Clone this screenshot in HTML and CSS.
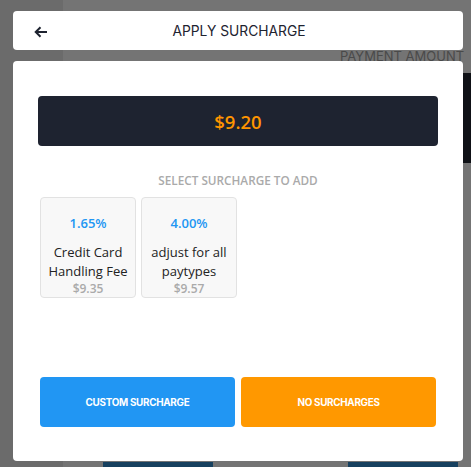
FILE: index.html
```html
<!DOCTYPE html>
<html>
<head>
<meta charset="utf-8">
<link rel="stylesheet" href="styles.css">
</head>
<body>
<div class="backdrop">
  <div class="bg-side"></div>
  <div class="bg-label">PAYMENT AMOUNT</div>
  <div class="bg-dark"></div>
  <div class="bg-btn bg-btn-a"></div>
  <div class="bg-btn bg-btn-b"></div>
</div>
<div class="modal">
  <div class="header">
    <svg class="back" width="14" height="12" viewBox="0 0 14 12"><path d="M13 6H2M6.5 1.2L1.7 6l4.8 4.8" fill="none" stroke="#1e2330" stroke-width="2"/></svg>
    <div class="title">APPLY SURCHARGE</div>
  </div>
  <div class="card">
    <div class="amount">$9.20</div>
    <div class="label">SELECT SURCHARGE TO ADD</div>
    <div class="options">
      <div class="option">
        <div class="pct">1.65%</div>
        <div class="name">Credit Card Handling Fee</div>
        <div class="price">$9.35</div>
      </div>
      <div class="option">
        <div class="pct">4.00%</div>
        <div class="name">adjust for all paytypes</div>
        <div class="price">$9.57</div>
      </div>
    </div>
    <div class="actions">
      <div class="btn btn-blue">CUSTOM SURCHARGE</div>
      <div class="btn btn-orange">NO SURCHARGES</div>
    </div>
  </div>
</div>
</body>
</html>
```
FILE: styles.css
```css
html, body { margin: 0; padding: 0; }
body {
  width: 471px;
  height: 467px;
  overflow: hidden;
  background: #747474;
  position: relative;
  font-family: "Open Sans", sans-serif;
}
.backdrop { position: absolute; inset: 0; }
.bg-side { position: absolute; left: 0; top: 0; width: 63px; height: 467px; background: #6b6b6b; }
.bg-label {
  position: absolute; left: 340px; top: 48px;
  font-family: Inter, sans-serif; font-size: 13px; color: #4a4a4a; white-space: nowrap;
}
.bg-dark { position: absolute; left: 463px; top: 73px; width: 8px; height: 90px; background: #0f1116; }
.bg-btn { position: absolute; top: 462px; height: 5px; background: #16405f; }
.bg-btn-a { left: 103px; width: 110px; }
.bg-btn-b { left: 348px; width: 110px; }

.modal {
  position: relative;
  display: flex;
  flex-direction: column;
  gap: 11px;
  padding: 11px 8px 0 13px;
}
.header {
  height: 39px;
  background: #fff;
  border-radius: 4px;
  display: flex;
  align-items: center;
  position: relative;
}
.back { position: absolute; left: 21px; top: 15px; }
.title {
  flex: 1;
  text-align: center;
  font-family: Inter, sans-serif;
  font-size: 13.8px;
  color: #1e2330;
  padding-left: 2px;
}
.card {
  height: 400px;
  box-sizing: border-box;
  background: #fff;
  border-radius: 4px;
  padding: 35px 25px 0 25px;
  display: flex;
  flex-direction: column;
}
.amount {
  height: 50px;
  background: #1e2330;
  border-radius: 4px;
  display: flex;
  align-items: center;
  justify-content: center;
  color: #ff9500;
  font-weight: 600;
  font-size: 18.5px;
  padding-top: 1px;
  box-sizing: border-box;
}
.label {
  margin-top: 26px;
  text-align: center;
  font-size: 11.75px;
  font-weight: 600;
  color: #aaaaaa;
  line-height: 16px;
}
.options {
  display: flex;
  gap: 5px;
  padding: 0 2px;
  margin-top: 9px;
}
.option {
  width: 96px;
  height: 101px;
  box-sizing: border-box;
  background: #f8f8f8;
  border: 1px solid #e2e2e2;
  border-radius: 4px;
  display: flex;
  flex-direction: column;
  align-items: center;
  text-align: center;
}
.pct {
  margin-top: 16px;
  font-size: 13px;
  font-weight: 600;
  color: #2196f3;
  line-height: 18px;
}
.name {
  margin-top: 11px;
  font-size: 13px;
  color: #222;
  line-height: 19px;
  padding: 0 3px;
}
.price {
  font-size: 12px;
  font-weight: 600;
  color: #aaaaaa;
  line-height: 15px;
  margin-top: 0;
}
.actions {
  display: flex;
  gap: 6px;
  padding: 0 2px;
  margin-top: 79px;
}
.btn {
  flex: 1;
  height: 50px;
  border-radius: 4px;
  display: flex;
  align-items: center;
  justify-content: center;
  color: #fff;
  font-family: Inter, sans-serif;
  font-weight: 700;
  font-size: 9.9px;
  letter-spacing: -0.3px;
}
.btn-blue { background: #2196f3; }
.btn-orange { background: #ff9800; }
```
